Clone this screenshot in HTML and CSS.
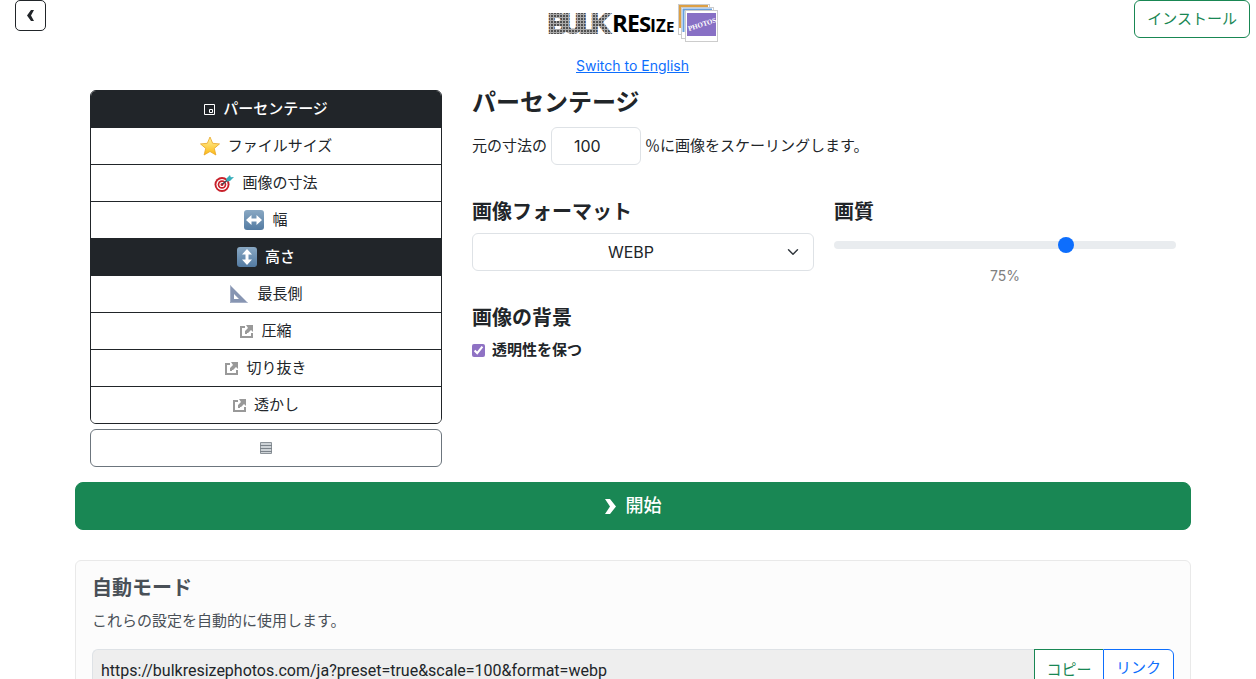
FILE: index.html
```html
<!DOCTYPE html>
<html lang="ja">
<head>
  <meta charset="UTF-8">
  <meta name="viewport" content="width=device-width, initial-scale=1.0">
  <title>Bulk Resize Photos</title>
  <link rel="stylesheet" href="styles.css">
</head>
<body>
  <svg class="symbols" aria-hidden="true">
    <symbol id="external" viewBox="0 0 13 13">
      <path d="M0 1h5v2H2v8h9V8h2v5H0z" fill="#999"/>
      <path d="M6 0h7v7l-2-2-3 3H7v1H5V6l3-3z" fill="#999"/>
    </symbol>
  </svg>

  <header class="header">
    <button type="button" class="btn btn-back" aria-label="戻る">
      <svg width="7" height="11" viewBox="0 0 7 11"><path d="M4 0h3L4 5.500l3 5.500H4L0 5.500z" fill="#212529"/></svg>
    </button>
    <div class="brand">
      <svg class="logo" width="170" height="42" viewBox="0 0 170 42" role="img" aria-label="Bulk Resize Photos">
        <defs>
          <pattern id="dots" width="3" height="3" patternUnits="userSpaceOnUse">
            <rect width="3" height="3" fill="#aaa"/>
            <rect width="2" height="2" fill="#505050"/>
          </pattern>
        </defs>
        <text class="logo-bulk" x="0 15 31 43" y="33" fill="url(#dots)" stroke="url(#dots)" stroke-width="2">BULK</text>
        <text class="logo-resize" y="32"><tspan x="64" font-size="24">R</tspan><tspan x="79" font-size="23">E</tspan><tspan x="91" font-size="22">S</tspan><tspan x="102" font-size="18">I</tspan><tspan x="108" font-size="17">Z</tspan><tspan x="118" font-size="15">E</tspan></text>
        <g stroke="#ccc" stroke-width="1">
          <rect x="130.500" y="4.500" width="31" height="30" fill="#fff"/>
          <path d="M132.500 28V6.500H160" fill="none" stroke="#dda044" stroke-width="3"/>
          <rect x="133.500" y="7.500" width="32" height="31" fill="#fff"/>
          <path d="M135.500 32V9.500H164" fill="none" stroke="#68a0dd" stroke-width="2"/>
          <rect x="137.500" y="10.500" width="32" height="31" fill="#fff"/>
        </g>
        <rect x="139" y="13" width="29" height="23" fill="#8870c5"/>
        <text class="logo-photos" x="141" y="31" transform="rotate(-18 141 31)">PHOTOS</text>
      </svg>
      <a href="#" class="lang-link">Switch to English</a>
    </div>
    <button type="button" class="btn btn-install">インストール</button>
  </header>

  <main class="container">
    <div class="settings">
      <div class="sidebar">
        <nav class="modes">
          <button type="button" class="btn mode active">
            <svg width="11" height="11" viewBox="0 0 11 11"><path d="M.5.5h10v10H.5zM5.500 8.500v-3h3v3z" fill="none" stroke="#fff"/></svg>
            パーセンテージ
          </button>
          <button type="button" class="btn mode">
            <svg width="20" height="20" viewBox="0 0 20 20">
              <defs><linearGradient id="gold" x2="0" y2="1"><stop stop-color="#fff3a0"/><stop offset="1" stop-color="#fcb913"/></linearGradient></defs>
              <path d="M10 1l2.700 6.300 6.800.600-5.200 4.500 1.600 6.600-5.900-3.500L4.100 19l1.600-6.600L.5 7.900l6.800-.600z" fill="url(#gold)" stroke="#e8a628" stroke-width=".800" stroke-linejoin="round"/>
            </svg>
            ファイルサイズ
          </button>
          <button type="button" class="btn mode">
            <svg width="20" height="20" viewBox="0 0 20 20">
              <circle cx="8" cy="11.500" r="7.500" fill="#c8202a"/>
              <circle cx="8" cy="11.500" r="5.600" fill="#fff"/>
              <circle cx="8" cy="11.500" r="4.300" fill="#c8202a"/>
              <circle cx="8" cy="11.500" r="2.600" fill="#fff"/>
              <circle cx="8" cy="11.500" r="1.500" fill="#c8202a"/>
              <path d="M8 11.500L16 5" stroke="#37474f" stroke-width="1.300"/>
              <path d="M12 6l4-4 .8 2.200L20 4l-4 4-3 .500z" fill="#36aebb"/>
            </svg>
            画像の寸法
          </button>
          <button type="button" class="btn mode">
            <svg width="20" height="20" viewBox="0 0 20 20">
              <defs><linearGradient id="steel" x2="0" y2="1"><stop stop-color="#89a8c3"/><stop offset="1" stop-color="#537ba2"/></linearGradient></defs>
              <rect width="20" height="20" rx="3" fill="url(#steel)"/>
              <path d="M2 10l5.500-5v3.500h5V5l5.500 5-5.500 5v-3.500h-5V15z" fill="#fff"/>
            </svg>
            幅
          </button>
          <button type="button" class="btn mode active">
            <svg width="20" height="20" viewBox="0 0 20 20">
              <rect width="20" height="20" rx="3" fill="url(#steel)"/>
              <path d="M10 2l5 5.500h-3.500v5H15L10 18l-5-5.500h3.500v-5H5z" fill="#fff"/>
            </svg>
            高さ
          </button>
          <button type="button" class="btn mode">
            <svg width="20" height="20" viewBox="0 0 20 20"><path fill-rule="evenodd" d="M1 1l18 18H1zM5 10v5h5z" fill="#8795b2"/><path d="M1.500 2v16.500H18" fill="none" stroke="#a7b1c7"/></svg>
            最長側
          </button>
          <button type="button" class="btn mode"><svg width="13" height="13"><use href="#external"/></svg>圧縮</button>
          <button type="button" class="btn mode"><svg width="13" height="13"><use href="#external"/></svg>切り抜き</button>
          <button type="button" class="btn mode"><svg width="13" height="13"><use href="#external"/></svg>透かし</button>
        </nav>
        <button type="button" class="btn btn-more" aria-label="メニュー">
          <svg width="12" height="12" viewBox="0 0 12 12"><path d="M.5.5h11v11H.5z" fill="#cdd2d6" stroke="#8b9298"/><path d="M0 3.500h12M0 6.500h12M0 9.500h12" stroke="#7b838a"/></svg>
        </button>
      </div>

      <div class="options">
        <h2>パーセンテージ</h2>
        <div class="scale-row">
          <label for="scale">元の寸法の</label>
          <input type="text" id="scale" class="control scale-input" value="100" inputmode="numeric">
          <span>％に画像をスケーリングします。</span>
        </div>

        <div class="option-grid">
          <div>
            <h3><label for="format">画像フォーマット</label></h3>
            <select id="format" class="control format-select">
              <option>JPEG</option>
              <option>PNG</option>
              <option selected>WEBP</option>
            </select>
          </div>
          <div>
            <h3><label for="quality">画質</label></h3>
            <input type="range" id="quality" class="quality" min="20" max="100" value="75">
            <output class="quality-value" for="quality">75%</output>
          </div>
          <div>
            <h3>画像の背景</h3>
            <label class="check" for="transparency">
              <input type="checkbox" id="transparency" checked>
              透明性を保つ
            </label>
          </div>
        </div>
      </div>
    </div>

    <button type="button" class="btn btn-start">
      <svg width="11" height="15" viewBox="0 0 11 15"><path d="M0 0h5l6 7.500L5 15H0l5-7.500z" fill="#fff"/></svg>
      開始
    </button>

    <section class="card">
      <h3>自動モード</h3>
      <p>これらの設定を自動的に使用します。</p>
      <div class="url-group">
        <input type="text" class="url-input" aria-label="URL" readonly value="https://bulkresizephotos.com/ja?preset=true&amp;scale=100&amp;format=webp">
        <button type="button" class="btn btn-copy">コピー</button>
        <a href="#" class="btn btn-link">リンク</a>
      </div>
    </section>
  </main>
</body>
</html>
```
FILE: styles.css
```css
* {
  box-sizing: border-box;
}

body {
  margin: 0;
  padding-left: 10px;
  background: #fff;
  color: #212529;
  font-family: Inter, "Noto Sans CJK JP", sans-serif;
  font-size: 15px;
  line-height: 22px;
}

h2, h3, p {
  margin: 0;
}

h2, h3 {
  line-height: 26px;
  font-weight: 700;
}

h2 {
  font-size: 24px;
  margin-bottom: 11px;
}

h3 {
  font-size: 20px;
  margin-bottom: 8px;
}

svg {
  flex: none;
}

.symbols {
  display: none;
}

.btn {
  display: flex;
  align-items: center;
  justify-content: center;
  gap: 8px;
  padding: 7px 12px;
  border: 1px solid #212529;
  border-radius: 6px;
  background: #fff;
  color: #212529;
  font: inherit;
  text-decoration: none;
  white-space: nowrap;
  cursor: pointer;
}

/* header */
.header {
  display: grid;
  grid-template-columns: 1fr auto 1fr;
  align-items: start;
  padding: 0 6px 12px 5px;
}

.btn-back {
  width: 31px;
  height: 31px;
  padding: 0;
  border-radius: 5px;
}

.brand {
  display: flex;
  flex-direction: column;
  align-items: center;
  gap: 12px;
}

.logo-bulk {
  font-family: "Liberation Sans Narrow", "Liberation Sans", sans-serif;
  font-size: 27px;
  font-weight: 700;
}

.logo-resize {
  font-family: "Open Sans", sans-serif;
  font-weight: 700;
  fill: #000;
}

.logo-photos {
  font-family: "Liberation Serif", serif;
  font-size: 7px;
  font-weight: 700;
  fill: #fff;
}

.lang-link {
  color: #0d6efd;
  font-size: 14px;
  line-height: 24px;
}

.btn-install {
  justify-self: end;
  border-color: #198754;
  color: #198754;
}

/* settings */
.container {
  max-width: 1116px;
  margin: 0 auto;
}

.settings {
  display: grid;
  grid-template-columns: 1fr 2fr;
  gap: 30px;
  padding: 0 15px 15px;
}

.modes {
  border: 1px solid #212529;
  border-radius: 6px;
  overflow: hidden;
  margin-bottom: 5px;
}

.mode {
  width: 100%;
  height: 37px;
  border-width: 0 0 1px;
  border-radius: 0;
}

.mode:last-child {
  height: 36px;
  border-bottom: 0;
}

.mode.active {
  background: #212529;
  color: #fff;
  font-weight: 500;
}

.btn-more {
  width: 100%;
  height: 38px;
  border-color: #6c757d;
}

.control {
  height: 38px;
  border: 1px solid #dee2e6;
  border-radius: 6px;
  background-color: #fff;
  color: #212529;
  font: inherit;
  font-size: 16px;
}

.scale-row {
  display: flex;
  align-items: center;
  gap: 4px;
  margin-bottom: 34px;
}

.scale-input {
  width: 90px;
  padding: 6px 22px;
}

.option-grid {
  display: grid;
  grid-template-columns: 1fr 1fr;
  column-gap: 20px;
  row-gap: 18px;
}

.format-select {
  display: block;
  width: 100%;
  padding: 6px 36px 6px 12px;
  appearance: none;
  text-align: center;
  text-align-last: center;
  background-image: url("data:image/svg+xml,%3Csvg xmlns='http://www.w3.org/2000/svg' viewBox='0 0 16 16'%3E%3Cpath fill='none' stroke='%23343a40' stroke-linecap='round' stroke-linejoin='round' stroke-width='2' d='m2 5 6 6 6-6'/%3E%3C/svg%3E");
  background-repeat: no-repeat;
  background-position: right 14px center;
  background-size: 12px;
}

.quality {
  display: block;
  width: 100%;
  height: 24px;
  margin: 0 0 8px;
  appearance: none;
  background: none;
}

.quality::-webkit-slider-runnable-track {
  height: 8px;
  border-radius: 8px;
  background: #e9ecef;
}

.quality::-webkit-slider-thumb {
  appearance: none;
  width: 16px;
  height: 16px;
  margin-top: -4px;
  border-radius: 50%;
  background: #0d6efd;
}

.quality-value {
  display: block;
  color: #808080;
  font-size: 14px;
  text-align: center;
}

.check {
  display: flex;
  align-items: center;
  gap: 7px;
  font-weight: 700;
}

.check input {
  width: 13px;
  height: 13px;
  margin: 0;
  accent-color: #8f72c4;
}

.btn-start {
  width: 100%;
  height: 48px;
  gap: 10px;
  border-color: #198754;
  border-radius: 8px;
  background: #198754;
  color: #fff;
  font-size: 18px;
  font-weight: 500;
}

/* auto mode */
.card {
  margin: 30px 0;
  padding: 14px 16px 16px;
  border: 1px solid #e9e9e9;
  border-radius: 6px;
  background: #fcfcfc;
  color: #495057;
}

.card p {
  padding-top: 1px;
  margin-bottom: 17px;
}

.url-group {
  display: flex;
}

.url-input {
  flex: 1;
  min-width: 0;
  height: 42px;
  padding: 6px 8px;
  border: 1px solid #dee2e6;
  border-right: 0;
  border-radius: 6px 0 0 6px;
  background: #eee;
  color: #212529;
  font-family: Roboto, sans-serif;
  font-size: 16px;
}

.btn-copy {
  width: 69px;
  border-color: #198754;
  border-right: 0;
  border-radius: 0;
  color: #198754;
}

.btn-link {
  width: 71px;
  align-items: flex-start;
  border-color: #0d6efd;
  border-radius: 0 6px 6px 0;
  color: #0d6efd;
}
```
